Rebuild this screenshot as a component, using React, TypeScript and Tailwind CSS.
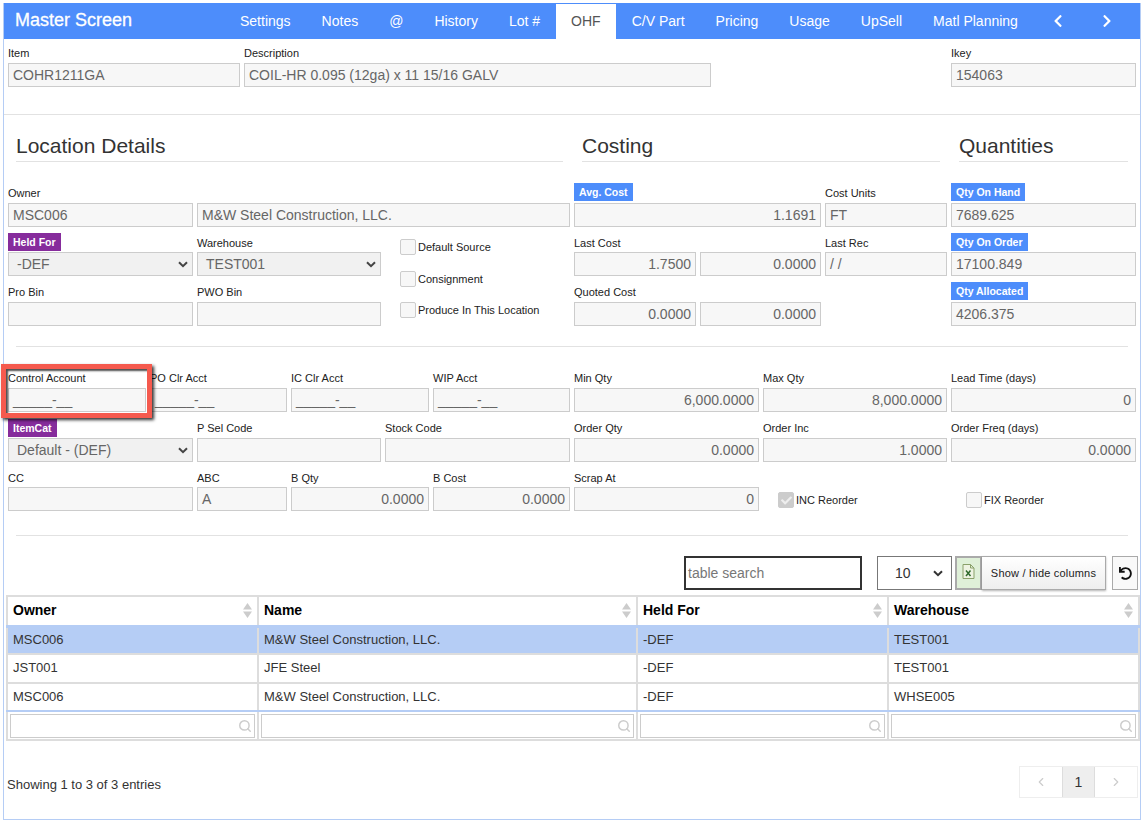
import React from 'react'
import { FaChevronLeft, FaChevronRight, FaCheck, FaUndo } from 'react-icons/fa'
import { Search, ChevronLeft, ChevronRight } from 'lucide-react'

const inputCls =
  'h-6 w-full border border-[#ccc] bg-[#f7f7f7] px-1 text-[14px] leading-[22px] text-[#666] truncate'

const Label = ({ text, low }: { text: string; low?: boolean }) => (
  <div className={`${low ? 'mb-[2px]' : 'mb-[3px]'} text-[11px] leading-[13px] text-[#222] whitespace-nowrap`}>{text}</div>
)

const Badge = ({ text, purple, lift }: { text: string; purple?: boolean; lift?: boolean }) => (
  <div
    className={`w-fit px-[5px] h-[18px] ${lift ? 'mb-[2px]' : 'mb-[1px]'} text-[10.5px] font-bold leading-[18px] text-white whitespace-nowrap ${
      purple ? 'bg-[#862c9c]' : 'bg-[#4d8dfb]'
    }`}
  >
    {text}
  </div>
)

const Box = ({ value, right, dark }: { value?: string; right?: boolean; dark?: boolean }) => (
  <div className={`${inputCls} ${right ? 'text-right' : ''} ${dark ? 'bg-[#f1f1f1]' : ''}`}>{value}</div>
)

const Select = ({ value }: { value: string }) => (
  <div className="h-6 w-full border border-[#ccc] bg-[#f1f1f1] pl-2 pr-1 text-[14px] leading-[22px] text-[#666] flex items-center justify-between">
    <span>{value}</span>
    <svg width="10" height="7" viewBox="0 0 10 7">
      <path d="M1 1.2 5 5.2 9 1.2" fill="none" stroke="#444" strokeWidth="2" />
    </svg>
  </div>
)

const Field = ({
  label,
  badge,
  purple,
  value,
  right,
  dark,
  select,
  low,
  lift,
  className,
}: {
  label?: string
  badge?: string
  purple?: boolean
  value?: string
  right?: boolean
  dark?: boolean
  select?: boolean
  low?: boolean
  lift?: boolean
  className?: string
}) => (
  <div className={`flex flex-col justify-end ${className ?? ''}`}>
    {badge ? <Badge text={badge} purple={purple} lift={lift} /> : label ? <Label text={label} low={low} /> : null}
    {select ? <Select value={value ?? ''} /> : <Box value={value} right={right} dark={dark} />}
  </div>
)

const Check = ({ text, checked, className }: { text: string; checked?: boolean; className?: string }) => (
  <div className={`flex items-center gap-[2px] text-[11px] text-[#222] ${className ?? ''}`}>
    <div
      className={`w-4 h-4 rounded-[2px] border border-[#ccc] flex items-center justify-center ${
        checked ? 'bg-[#ccc]' : 'bg-[#f7f7f7]'
      }`}
    >
      {checked && <FaCheck className="text-[#eee] text-[11px]" />}
    </div>
    <span className="whitespace-nowrap">{text}</span>
  </div>
)

const Heading = ({ text, className }: { text: string; className: string }) => (
  <div className={`border-b border-[#e2e2e2] h-[31px] text-[21px] leading-[30px] text-[#333] ${className}`}>{text}</div>
)

const SortIcon = () => (
  <svg width="9" height="15" viewBox="0 0 9 15" className="absolute right-[5px] top-[6px]">
    <path d="M4.5 0 9 6.5H0ZM4.5 15 0 8.5H9Z" fill="#ccc" />
  </svg>
)

const tabs = ['Settings', 'Notes', '@', 'History', 'Lot #', 'OHF', 'C/V Part', 'Pricing', 'Usage', 'UpSell', 'Matl Planning']
const columns = ['Owner', 'Name', 'Held For', 'Warehouse']
const rows = [
  ['MSC006', 'M&W Steel Construction, LLC.', '-DEF', 'TEST001'],
  ['JST001', 'JFE Steel', '-DEF', 'TEST001'],
  ['MSC006', 'M&W Steel Construction, LLC.', '-DEF', 'WHSE005'],
]

export default function App() {
  return (
    <div className="w-[1144px] h-[823px] bg-white pt-[3px] pl-[3px] [font-family:Liberation_Sans,sans-serif]">
      <div className="w-[1138px] h-[817px] border-x border-b border-[#b5cdf5] relative">
        {/* top bar */}
        <div className="h-9 bg-[#4d8dfb] flex text-white">
          <div className="w-[220.5px] pl-[11px] text-[18px] leading-[34px] [-webkit-text-stroke:0.3px_white]">Master Screen</div>
          {tabs.map((t) => (
            <div
              key={t}
              className={`px-[15.5px] text-[14px] leading-9 ${t === 'OHF' ? 'bg-white text-[#555] mt-[1px] leading-[35px]' : ''}`}
            >
              {t}
            </div>
          ))}
          <div className="w-[49px] flex items-center justify-center">
            <FaChevronLeft className="text-[14px]" />
          </div>
          <div className="w-[49px] flex items-center justify-center">
            <FaChevronRight className="text-[14px]" />
          </div>
        </div>

        {/* item row */}
        <div className="h-[76px] border-b border-[#e2e2e2] pl-1 flex gap-1 pt-[8px] items-start">
          <Field label="Item" value="COHR1211GA" className="w-[232px]" />
          <Field label="Description" value="COIL-HR 0.095 (12ga) x 11 15/16 GALV" className="w-[467px]" />
          <Field label="Ikey" value="154063" dark className="w-[185px] ml-[236px]" />
        </div>

        {/* section titles */}
        <div className="flex pt-4 h-[68px] items-start">
          <Heading text="Location Details" className="ml-[12px] w-[547px]" />
          <Heading text="Costing" className="ml-[19px] w-[358px]" />
          <Heading text="Quantities" className="ml-[19px] w-[169px]" />
        </div>

        {/* location, costing, quantities */}
        <div className="ml-1 grid grid-cols-[185px_184px_185px_122px_121px_122px_185px] grid-rows-[44px_49px_50px] gap-x-1">
          <Field label="Owner" value="MSC006" />
          <Field value="M&W Steel Construction, LLC." className="col-span-2" />
          <Field badge="Avg. Cost" lift value="1.1691" right className="col-span-2" />
          <Field label="Cost Units" value="FT" dark />
          <Field badge="Qty On Hand" lift value="7689.625" dark />

          <Field badge="Held For" purple select value="-DEF" />
          <Field label="Warehouse" low select value="TEST001" />
          <div className="row-span-2 pl-[15px] pt-[12px] flex flex-col gap-[15px]">
            <Check text="Default Source" />
            <Check text="Consignment" />
            <Check text="Produce In This Location" />
          </div>
          <Field label="Last Cost" low value="1.7500" right />
          <Field value="0.0000" right />
          <Field label="Last Rec" low value="/ /" dark />
          <Field badge="Qty On Order" value="17100.849" dark />

          <Field label="Pro Bin" />
          <Field label="PWO Bin" />
          <Field label="Quoted Cost" value="0.0000" right />
          <Field value="0.0000" right />
          <div />
          <Field badge="Qty Allocated" lift value="4206.375" dark />
        </div>

        <div className="ml-[12px] mt-5 h-px w-[1112px] bg-[#e2e2e2]" />

        {/* accounts and reorder */}
        <div className="ml-1 mt-[24px] flex gap-1 h-[41px]">
          <Field label="Control Account" value="_____-__" className="w-[138px] justify-end" />
          <Field label="PO Clr Acct" value="_____-__" className="w-[137px]" />
          <Field label="IC Clr Acct" value="_____-__" className="w-[138px]" />
          <Field label="WIP Acct" value="_____-__" className="w-[137px]" />
          <Field label="Min Qty" value="6,000.0000" right className="w-[185px]" />
          <Field label="Max Qty" value="8,000.0000" right className="w-[184px]" />
          <Field label="Lead Time (days)" value="0" right className="w-[185px]" />
        </div>
        <div className="ml-1 flex gap-1 h-[50px]">
          <Field badge="ItemCat" purple select value="Default - (DEF)" className="w-[185px]" />
          <Field label="P Sel Code" className="w-[184px]" />
          <Field label="Stock Code" className="w-[185px]" />
          <Field label="Order Qty" value="0.0000" right className="w-[185px]" />
          <Field label="Order Inc" value="1.0000" right className="w-[184px]" />
          <Field label="Order Freq (days)" value="0.0000" right className="w-[185px]" />
        </div>
        <div className="ml-1 flex gap-1 h-[49px]">
          <Field label="CC" low className="w-[185px]" />
          <Field label="ABC" low value="A" className="w-[90px]" />
          <Field label="B Qty" low value="0.0000" right className="w-[138px]" />
          <Field label="B Cost" low value="0.0000" right className="w-[137px]" />
          <Field label="Scrap At" low value="0" right className="w-[185px]" />
          <Check text="INC Reorder" checked className="ml-[15px] w-[184px] mt-[30px] h-4" />
          <Check text="FIX Reorder" className="mt-[30px] h-4" />
        </div>

        <div className="ml-[12px] mt-6 h-px w-[1112px] bg-[#e2e2e2]" />

        {/* table toolbar */}
        <div className="mt-5 flex h-[34px] pl-[680px] text-[14px]">
          <div className="w-[178px] border-2 border-[#333] pl-[2px] leading-[30px] text-[#777]">table search</div>
          <div className="ml-[15px] w-[75px] border border-[#777] pl-[17px] pr-[8px] flex items-center justify-between text-[#333]">
            <span>10</span>
            <svg width="10" height="7" viewBox="0 0 10 7">
              <path d="M1 1.2 5 5.2 9 1.2" fill="none" stroke="#333" strokeWidth="2" />
            </svg>
          </div>
          <div className="ml-[3px] w-[27px] bg-[#dff0d8] border-2 border-[#aaa] flex items-center justify-center">
            <svg width="13" height="15" viewBox="0 0 13 15" className="-mt-1">
              <path d="M1 .5H8.500L12 4V14.500H1Z M8.500 .5V4H12" fill="#eef3e2" stroke="#8aa06a" />
              <path d="M4 6.500 8.500 12M8.500 6.500 4 12" stroke="#2f6a2c" strokeWidth="1.500" />
            </svg>
          </div>
          <div className="w-[124px] border border-[#aaa] border-l-0 bg-linear-to-b from-white to-[#eee] shadow-[0_1px_2px_rgba(0,0,0,0.3)] text-center text-[11px] tracking-[0.2px] leading-[32px] text-[#222]">
            Show / hide columns
          </div>
          <div className="ml-[6px] w-[26px] border border-[#aaa] bg-[#f9f9f9] flex items-center justify-center">
            <FaUndo className="text-[13px] text-[#111]" />
          </div>
        </div>

        {/* table */}
        <table className="ml-[2px] mt-[5px] w-[1132px] table-fixed border-collapse text-[13px] text-[#333]">
          <colgroup>
            <col className="w-[251px]" />
            <col className="w-[379px]" />
            <col className="w-[251px]" />
            <col className="w-[251px]" />
          </colgroup>
          <thead>
            <tr className="h-[30px]">
              {columns.map((c) => (
                <th key={c} className="relative border-2 border-b-[3px] border-[#ddd] border-b-[#b5cdf5] pl-[5px] text-left text-[14px] font-bold text-black">
                  {c}
                  <SortIcon />
                </th>
              ))}
            </tr>
          </thead>
          <tbody>
            {rows.map((r, i) => (
              <tr key={i} className={i === 0 ? 'h-[28px] bg-[#b5cdf5]' : 'h-[28.500px]'}>
                {r.map((c, j) => (
                  <td
                    key={j}
                    className={`border-2 border-[#ddd] pl-[5px] ${i === 2 ? 'border-b-[#b5cdf5]' : 'pb-[2px]'}`}
                  >
                    {c}
                  </td>
                ))}
              </tr>
            ))}
            <tr className="h-[29px]">
              {columns.map((c) => (
                <td key={c} className="border-2 border-[#ddd] px-[1px] py-[1px]">
                  <div className="h-6 mx-[1px] border border-[#ccc] flex items-center justify-end pr-[2px]">
                    <Search size={14} strokeWidth={2.500} className="text-[#ccc]" />
                  </div>
                </td>
              ))}
            </tr>
          </tbody>
        </table>

        {/* footer */}
        <div className="mt-[25px] pl-[3px] pr-[2px] flex items-center justify-between text-[13px] text-[#444]">
          <span className="text-[#333] mt-[6px]">Showing 1 to 3 of 3 entries</span>
          <div className="flex h-[32px] border border-[#eee] text-[14px] text-[#333]">
            <div className="w-[42px] flex items-center justify-center"><ChevronLeft size={14} className="text-[#ccc]" /></div>
            <div className="w-[33px] bg-[#eee] border-x border-[#ddd] flex items-center justify-center">1</div>
            <div className="w-[42px] flex items-center justify-center"><ChevronRight size={14} className="text-[#ccc]" /></div>
          </div>
        </div>

        {/* annotation around Control Account */}
        <div className="absolute left-[-3px] top-[361px] w-[151px] h-[54px] border-[5px] border-[#f55a4e] shadow-[2px_2px_3px_rgba(0,0,0,0.8),inset_2px_2px_2px_rgba(0,0,0,0.7)]" />
      </div>
    </div>
  )
}
